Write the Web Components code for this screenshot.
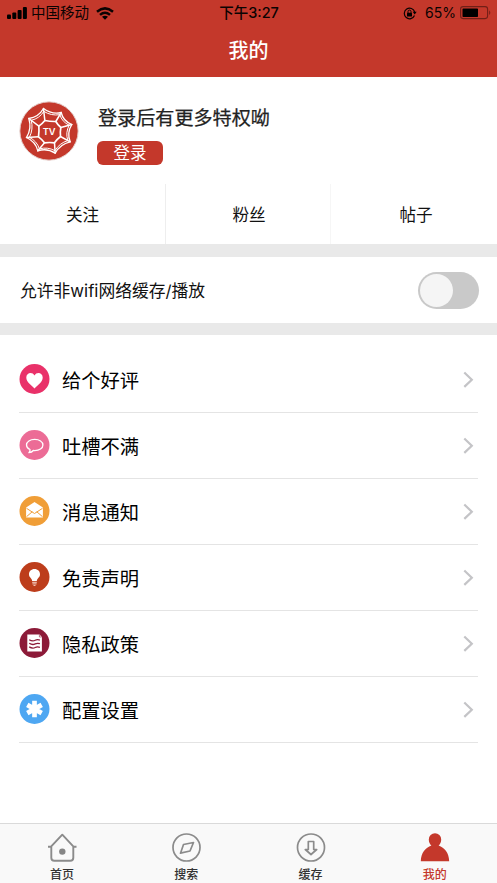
<!DOCTYPE html>
<html lang="zh-CN">
<head>
<meta charset="utf-8">
<title>我的</title>
<style>
html,body{margin:0;height:100%}
body{font-family:Inter,"Noto Sans CJK SC",sans-serif;background:#fff;color:#111;overflow:hidden}
</style>
</head>
<body>
<my-page></my-page>
<script>
class Base extends HTMLElement{
  connectedCallback(){
    if(this.shadowRoot) return;
    this.attachShadow({mode:'open'}).innerHTML=this.render();
  }
}
const define=(name,render)=>customElements.define(name,class extends Base{render(){return render(this)}});

define('status-bar',()=>`<style>
:host{display:grid;grid-template-columns:1fr auto 1fr;height:26px;align-items:center;color:#0b0302;font-size:14.5px;line-height:26px;white-space:nowrap}
.l,.r{display:flex;align-items:center}
.l{padding-left:7px}.l span{margin:0 7px 0 4px}
.r{justify-content:flex-end;padding-right:6px}.r span{margin:0 4px 0 8px;font-size:14px}
.t{font-weight:500;padding-left:1px}
svg{display:block}
</style>
<div class="l"><svg width="20" height="12" viewBox="0 0 20 12"><rect y="7.500" width="4" height="4.500" rx="1"/><rect x="5.300" y="5.500" width="4" height="6.500" rx="1"/><rect x="10.600" y="3" width="4" height="9" rx="1"/><rect x="15.900" width="4" height="12" rx="1"/></svg><span>中国移动</span><svg width="18" height="13" viewBox="0 0 18 13"><g fill="none" stroke="#0b0302" stroke-width="2.500"><path d="M1 4.700Q9-2 17 4.700M4 7.900Q9 3.700 14 7.900"/></g><path d="M6 9.800Q9 7.700 12 9.800L9 12.700Z"/></svg></div>
<div class="t">下午3:27</div>
<div class="r"><svg width="14" height="13" viewBox="0 0 14 13"><path d="M11.500 8.500A5.300 5.300 0 1 1 11.700 5" fill="none" stroke="#0b0302" stroke-width="1.200"/><path d="M9.700 4.800h4l-2 2.800z"/><rect x="4" y="5.700" width="5" height="3.800" rx=".5"/><path d="M5 6V4.600a1.500 1.500 0 0 1 3 0V6" fill="none" stroke="#0b0302"/></svg><span>65%</span><svg width="31" height="14" viewBox="0 0 31 14"><rect x=".6" y=".6" width="27" height="12" rx="2.500" fill="none" stroke="#711f17" stroke-width="1.100"/><rect x="2.500" y="2.400" width="15.500" height="8.500" rx=".7"/><path d="M29.200 4.300q2.200 2.400 0 4.800z" fill="#711f17"/></svg></div>`);

define('app-header',()=>`<style>
:host{display:block;height:77px;background:#c4382b;flex:none}
h1{margin:0;height:51px;line-height:51px;text-align:center;color:#fff;font-size:20px;font-weight:500}
</style><status-bar></status-bar><h1><slot></slot></h1>`);

define('web-logo',()=>{
  const outer=[[132,70],[185,82],[217,118],[212,170],[167,204],[115,197],[81,157],[88,100]];
  const inner=[[136,106],[169,109],[184,127],[183,154],[165,173],[135,173],[117,155],[118,123]];
  const c=[149,138];
  const mid=outer.map((p,i)=>p.map((v,k)=>v*.76+inner[i][k]*.24));
  const ring=(pts,bend)=>'M'+pts[0]+pts.map((p,i)=>{const q=pts[(i+1)%8];return 'Q'+[0,1].map(k=>((p[k]+q[k])/2)*(1-bend)+c[k]*bend)+' '+q}).join('')+'Z';
  return `<style>:host{display:block;width:60px;height:60px}svg{display:block}</style>
<svg width="60" height="60" viewBox="58.500 47.500 180 180"><circle cx="148.500" cy="137.500" r="87.500" fill="#c4382b" stroke="#e5d2cf" stroke-width="3"/>
<g fill="none" stroke="#fff" stroke-linejoin="round"><path stroke-width="4" d="${ring(outer,.2)}"/><path stroke-width="3" d="${ring(mid,.17)}"/><path stroke-width="5" d="${ring(inner,.06)}"/><path stroke-width="4.500" stroke-linecap="round" d="${outer.map((p,i)=>'M'+p+'L'+inner[i]).join('')}"/></g>
<text x="149" y="151" text-anchor="middle" font-family="Inter" font-size="28" font-weight="600" fill="#fff">TV</text></svg>`});

define('profile-card',()=>`<style>
:host{display:flex;height:107px;flex:none;box-sizing:border-box;padding:23.500px 0 0 19px}
.i{margin-left:19px}
.n{font-size:19.100px;line-height:28px;margin-top:3px;color:#222;font-weight:400;-webkit-text-stroke:.25px #222}
button{display:block;width:66px;height:24px;margin:9px 0 0 -1px;padding:0;border:0;border-radius:6px;background:#c4382b;color:#fff;font:16.500px/23px "Noto Sans CJK SC",sans-serif}
</style><web-logo></web-logo><div class="i"><div class="n"><slot></slot></div><button>登录</button></div>`);

define('stat-tabs',()=>`<style>
:host{display:grid;grid-template-columns:166px 165px 1fr;height:60px;flex:none}
::slotted(span){display:block;text-align:center;height:60px;line-height:63px;font-size:16.600px;box-sizing:border-box;border-right:1px solid #eee}
::slotted(span:nth-child(2)){padding-left:2px;border-color:#f6f6f6}
::slotted(span:last-child){border:0;padding-left:4px}
</style><slot></slot>`);

define('section-gap',()=>`<style>:host{display:block;height:var(--h,12px);background:#e9e9e9;flex:none}</style>`);

define('toggle-row',()=>`<style>
:host{display:flex;height:66px;flex:none;align-items:center;justify-content:space-between;padding:0 18px 0 20px;font-size:16.800px;white-space:nowrap}
.s{width:61px;height:37px;border-radius:19px;background:#c9c9c9;display:flex;align-items:center;padding-left:2px;box-sizing:border-box}
.s i{width:33px;height:33px;border-radius:50%;background:#f5f5f5}
</style><slot></slot><div class="s"><i></i></div>`);

const icons={
heart:['#e93169','<path fill="#fff" d="M15 24.500C12 21 6.800 18.300 6.800 13.500c0-5 6.200-6 8.200-2 2-4 8.200-3 8.200 2 0 4.800-5.200 7.500-8.200 11z"/>'],
chat:['#ec6c96','<path fill="none" stroke="#fff" stroke-width="1.300" stroke-linejoin="round" d="M10.500 19.500C8.200 18.500 7 16.800 7 15c0-3.400 3.600-5.600 8.200-5.600s8.200 2.200 8.200 5.600-3.600 5.600-8.200 5.600l-1.400-.1c-1 1.300-2.600 2-4.400 2.200 1-.9 1.300-1.900 1.100-3.200z"/>'],
mail:['#f09e37','<path fill="#fff" d="M6.600 11.600 15 6l8.400 5.600V21.500H6.600z"/><path fill="none" stroke="#f09e37" stroke-width="1" d="M7 12.300l8 5.200 8-5.200M7 20.700l5.800-5M23 20.700l-5.800-5"/>'],
bulb:['#bd3d1b','<path fill="#fff" d="M15 7c-3.300 0-5.500 2.400-5.500 5.400 0 3 2.900 3.600 3.200 6.600h4.600c.3-3 3.200-3.600 3.200-6.600C20.500 9.400 18.300 7 15 7z"/><path stroke="#f5cfc4" stroke-width="1" d="M12.700 20.300h4.600M12.900 21.900h4.200M14 23.400h2"/>'],
doc:['#8c1a38','<path fill="#fff" d="M7.800 6.600h12.200l2.400 2.400v14.500H7.800z"/><path d="M19.900 6.800V9h2.200" fill="none" stroke="#8c1a38" stroke-width=".6"/><path fill="none" stroke="#8c1a38" stroke-width="1.300" d="M9.700 11.700c3 1.800 4.500 1.400 6 .6s3-.8 4.700-.2M9.700 15.300c3 1.800 4.500 1.400 6 .6s3-.8 4.700-.2M9.700 18.900c3 1.800 4.500 1.400 6 .6s3-.8 4.700-.2"/>'],
star:['#4ea7f2','<path stroke="#fff" stroke-width="4.700" d="M15 6.700v16.600M7.800 10.850l14.400 8.300M22.200 10.850l-14.400 8.300"/>']};
define('menu-row',e=>{const [c,p]=icons[e.getAttribute('icon')];return `<style>
:host{display:flex;height:66px;box-sizing:border-box;align-items:center;border-bottom:1px solid #e4e4e4;font-size:19.300px;color:#000}
svg{display:block;flex:none}.t{flex:1;margin-left:12px;padding-top:2px;line-height:30px}.a{margin-right:4px}
</style><svg width="31" height="31" viewBox="-.5 0 31 31"><circle cx="15" cy="15" r="15" fill="${c}"/>${p}</svg><div class="t"><slot></slot></div><svg class="a" width="11" height="17" viewBox="0 0 11 17"><path d="M1.300 1.500 8.800 8.700l-7.500 7.200" fill="none" stroke="#c4c4c7" stroke-width="2.200"/></svg>`});
define('menu-list',()=>`<style>:host{display:block;flex:1;padding:12px 19px 0}</style><slot></slot>`);

const tabs={
home:'<path d="M4.300 14v11.500q0 3 3 3h16q3 0 3-3V14M1 14.500H4L15.300 2.500 26.500 14.500H29.500" transform="translate(0 .2)" fill="none" stroke="#8b8b8b" stroke-width="1.900" stroke-linejoin="round"/><circle cx="15.300" cy="19.600" r="3.200" fill="#858585"/>',
find:'<g fill="none" stroke="#8b8b8b" stroke-width="1.700"><circle cx="15.500" cy="15.500" r="13.500"/><path stroke-linejoin="round" d="M12.500 12.500 22.500 10.500 19 19 9.500 21.200z"/></g>',
save:'<g fill="none" stroke="#8b8b8b" stroke-width="1.700"><circle cx="15" cy="15.500" r="13.500"/><path stroke-linejoin="round" d="M12.300 9.500h5.400v8h3L15 22.500l-5.700-5h3z"/></g>',
user:'<path fill="#c4382b" d="M15 1.200a6.200 6.200 0 0 0-6.200 6.200c0 2.800 1.100 4.700 2.600 6C5.500 15.500 1 20.500.8 29.200h28.400C29 20.500 24.500 15.500 18.600 13.400c1.500-1.300 2.600-3.200 2.600-6A6.200 6.200 0 0 0 15 1.200z"/>'};
define('tab-item',e=>`<style>
:host{display:flex;flex-direction:column;align-items:center;padding-top:8px;font-size:12px;line-height:18px;font-weight:500;color:#333}
:host([active]){color:#c4382b}svg{display:block}span{margin-top:3px}
</style><svg width="30" height="31" viewBox="0 0 30 31">${tabs[e.getAttribute('icon')]}</svg><span><slot></slot></span>`);
define('tab-bar',()=>`<style>:host{display:grid;grid-template-columns:repeat(4,1fr);height:60px;box-sizing:border-box;border-top:1px solid #dadada;background:#f9f9f9;flex:none}</style><slot></slot>`);

define('my-page',()=>`<style>:host{display:flex;flex-direction:column;height:883px;width:497px}</style>
<app-header>我的</app-header>
<profile-card>登录后有更多特权呦</profile-card>
<stat-tabs><span>关注</span><span>粉丝</span><span>帖子</span></stat-tabs>
<section-gap style="--h:13px"></section-gap>
<toggle-row>允许非wifi网络缓存/播放</toggle-row>
<section-gap></section-gap>
<menu-list><menu-row icon="heart">给个好评</menu-row><menu-row icon="chat">吐槽不满</menu-row><menu-row icon="mail">消息通知</menu-row><menu-row icon="bulb">免责声明</menu-row><menu-row icon="doc">隐私政策</menu-row><menu-row icon="star">配置设置</menu-row></menu-list>
<tab-bar><tab-item icon="home">首页</tab-item><tab-item icon="find">搜索</tab-item><tab-item icon="save">缓存</tab-item><tab-item icon="user" active>我的</tab-item></tab-bar>`);
</script>
</body>
</html>
